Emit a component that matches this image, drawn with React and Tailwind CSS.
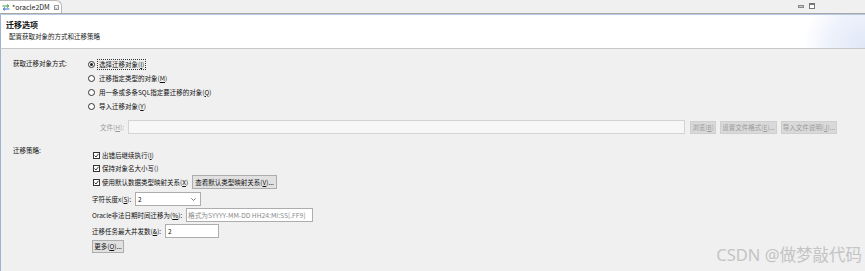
import React from 'react';

const font = { fontFamily: '"Noto Sans CJK SC", "Noto Sans", sans-serif' };

function Mn({ pre, k, post = '' }) {
  return (
    <span>
      {pre}(<span className="underline">{k}</span>){post}
    </span>
  );
}

function Radio({ checked, children, focus }) {
  return (
    <div className="flex h-[14px] items-center">
      <span className="flex h-[7px] w-[7px] items-center justify-center rounded-full border border-[#333] bg-white">
        {checked && <span className="h-[3px] w-[3px] rounded-full bg-[#222]" />}
      </span>
      <span className={`ml-[2px] px-[1px] leading-[9px] ${focus ? 'border border-dotted border-[#333]' : 'border border-transparent'}`}>
        {children}
      </span>
    </div>
  );
}

function Check({ children }) {
  return (
    <div className="flex items-center">
      <span className="flex h-[7px] w-[7px] items-center justify-center border border-[#333] bg-white">
        <svg width="5" height="5" viewBox="0 0 5 5">
          <path d="M0.5 2.5 L2 4 L4.5 0.8" fill="none" stroke="#222" strokeWidth="0.9" />
        </svg>
      </span>
      <span className="ml-[2px]">{children}</span>
    </div>
  );
}

function Btn({ children, disabled, className = '' }) {
  return (
    <div
      className={`flex items-center justify-center border px-[2px] leading-none ${
        disabled ? 'border-[#cfcfcf] bg-[#d9d9d9] text-[#9a9a9a]' : 'border-[#adadad] bg-[#e1e1e1] text-[#111]'
      } ${className}`}
    >
      {children}
    </div>
  );
}

export default function App() {
  return (
    <div className="relative flex h-[271px] w-[865px] flex-col overflow-hidden whitespace-nowrap bg-[#f0f0f0] text-[6.5px] leading-[9px] text-[#111]" style={font}>
      {/* tab strip */}
      <div className="flex h-[14px] items-end border-b border-[#a8a8a8] bg-[#f0f0f0]">
        <div className="flex h-[13px] w-[62px] items-center rounded-tr-[6px] border-r border-t border-[#b8b8b8] bg-white pl-[2px]">
          <svg width="8" height="7" viewBox="0 0 8 7">
            <path d="M0.5 2 H6.5 M5 0.5 L6.8 2 L5 3.5" fill="none" stroke="#3a9a3a" strokeWidth="1" />
            <path d="M7.5 5 H1.5 M3 3.5 L1.2 5 L3 6.5" fill="none" stroke="#3a6fc0" strokeWidth="1" />
          </svg>
          <span className="ml-[2px] text-[7px] leading-none text-[#222]">*oracle2DM</span>
          <span className="ml-[4px] flex h-[5px] w-[5px] items-center justify-center border border-[#999] text-[5px] leading-none text-[#777]">×</span>
        </div>
        <div className="flex-1" />
        <div className="mb-[4px] mr-[50px] flex items-center gap-[5px]">
          <span className="h-[3px] w-[6px] border border-[#888] bg-[#ccc]" />
          <span className="h-[6px] w-[6px] border border-[#777] border-t-2 bg-white" />
        </div>
      </div>
      <div className="h-[1px] bg-[#b5cbe3]" />

      {/* header */}
      <div className="relative flex h-[34px] flex-col border-b border-[#c8c8c8] border-l border-l-[#9fb4cc] bg-white pl-[5px]">
        <div className="mt-[5px] text-[8px] font-bold leading-[10px]">迁移选项</div>
        <div className="ml-[3px] mt-[2px] leading-[9px] text-[#222]">配置获取对象的方式和迁移策略</div>
        <div className="absolute right-0 top-0 h-full w-[75px] bg-[radial-gradient(circle_at_100%_100%,#dfe7f7_0%,#eef2fb_45%,#ffffff_75%)]" />
      </div>

      {/* body */}
      <div className="flex flex-1 flex-col border-l border-l-[#9fb4cc] pt-[8px]">
        <div className="flex">
          <div className="w-[87px] pl-[12px] leading-[12px]">获取迁移对象方式:</div>
          <div className="flex flex-col">
            <Radio checked focus><Mn pre="选择迁移对象" k="I" /></Radio>
            <Radio><Mn pre="迁移指定类型的对象" k="M" /></Radio>
            <Radio><Mn pre="用一条或多条SQL指定要迁移的对象" k="Q" /></Radio>
            <Radio><Mn pre="导入迁移对象" k="Y" /></Radio>
          </div>
        </div>

        <div className="mt-[7px] flex h-[14px] items-center">
          <span className="ml-[99px] w-[28px] text-[#9a9a9a]"><Mn pre="文件" k="H" post=":" /></span>
          <div className="h-[14px] w-[557px] border border-[#d4d4d4] bg-[#f7f7f7]" />
          <Btn disabled className="ml-[5px] h-[13px] w-[26px]"><Mn pre="浏览" k="B" /></Btn>
          <Btn disabled className="ml-[4px] h-[13px] w-[57px]"><Mn pre="设置文件格式" k="E" post="..." /></Btn>
          <Btn disabled className="ml-[4px] h-[13px] w-[56px]"><Mn pre="导入文件说明" k="J" post="..." /></Btn>
        </div>

        <div className="mt-[9px] flex">
          <div className="w-[91px] pl-[12px] leading-[14px]">迁移策略:</div>
          <div className="flex flex-col pt-[6px]">
            <div className="ml-[1px] flex h-[13px] items-center"><Check><Mn pre="出错后继续执行" k="I" /></Check></div>
            <div className="ml-[1px] flex h-[13px] items-center"><Check><Mn pre="保持对象名大小写" k="" /></Check></div>
            <div className="ml-[1px] flex h-[14px] items-center">
              <Check><Mn pre="使用默认数据类型映射关系" k="X" /></Check>
              <Btn className="ml-[4px] h-[14px] w-[85px]"><Mn pre="查看默认类型映射关系" k="V" post="..." /></Btn>
            </div>
            <div className="mt-[3px] flex h-[14px] items-center">
              <span className="w-[43px]"><Mn pre="字符长度x" k="S" post=":" /></span>
              <div className="flex h-[14px] w-[66px] items-center justify-between border border-[#adadad] bg-white pl-[2px] pr-[4px]">
                <span>2</span>
                <svg width="5" height="3" viewBox="0 0 5 3"><path d="M0.3 0.3 L2.5 2.5 L4.7 0.3" fill="none" stroke="#555" strokeWidth="0.8" /></svg>
              </div>
            </div>
            <div className="mt-[2px] flex h-[14px] items-center">
              <span className="w-[94px]"><Mn pre="Oracle非法日期时间迁移为" k="%" post=":" /></span>
              <div className="flex h-[14px] w-[127px] items-center overflow-hidden border border-[#adadad] bg-white pl-[1px] text-[6.7px] text-[#8a8a8a]">格式为SYYYY-MM-DD HH24:MI:SS[.FF9]</div>
            </div>
            <div className="mt-[2px] flex h-[14px] items-center">
              <span className="w-[73px]"><Mn pre="迁移任务最大并发数" k="&amp;" post=":" /></span>
              <div className="flex h-[14px] w-[54px] items-center border border-[#adadad] bg-white pl-[2px]">2</div>
            </div>
            <div className="mt-[2px] flex">
              <Btn className="h-[13px] w-[32px]"><Mn pre="更多" k="O" post="..." /></Btn>
            </div>
          </div>
        </div>
      </div>

      <div className="absolute bottom-[8px] right-[3px] text-[16.5px] leading-none text-[#c4c4c4]" style={{ fontFamily: '"Noto Sans", "Noto Sans CJK SC", sans-serif' }}>
        CSDN @做梦敲代码
      </div>
    </div>
  );
}
